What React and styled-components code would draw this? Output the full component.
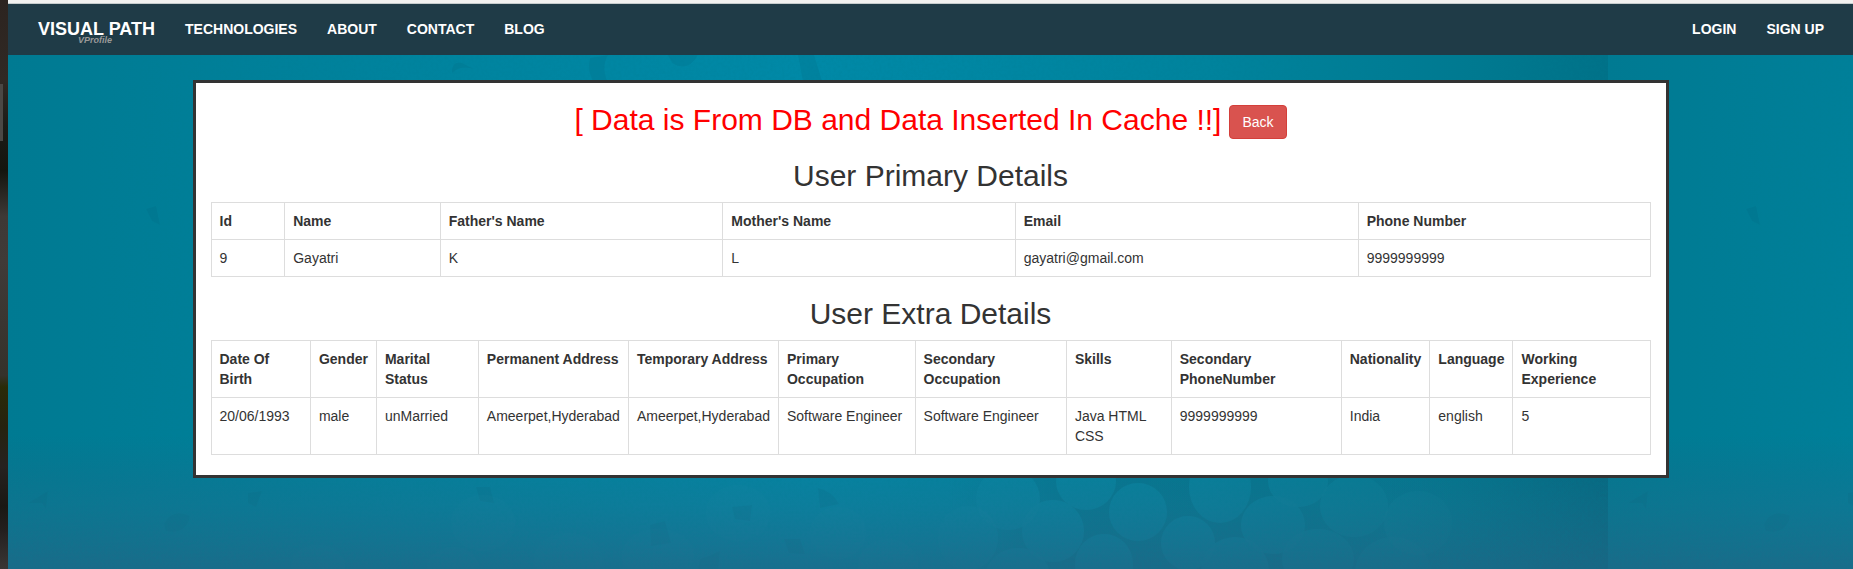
import React from "react";
import styled, { createGlobalStyle } from "styled-components";

const GlobalStyle = createGlobalStyle`
  *, *::before, *::after { box-sizing: border-box; }
  html, body { margin: 0; padding: 0; }
  body {
    font-family: "Liberation Sans", Arial, sans-serif;
    font-size: 14px;
    line-height: 20px;
    color: #333;
    background: #007d97;
  }
`;

const Frame = styled.div`
  display: grid;
  grid-template-columns: 8px minmax(0, 1fr);
  min-height: 100vh;
`;

const DesktopEdge = styled.div`
  background:
    linear-gradient(#4a4845, #4a4845) 0 84px / 3px 57px no-repeat,
    linear-gradient(180deg,
      #2c2420 0%, #302924 14%, #1c1c18 22%, #14150e 30%,
      #3e3936 38%, #403b38 46%, #35322b 66%, #2a2b08 68%,
      #26230f 75%, #262220 82%, #1a1814 89%, #231f1e 93%, #3a3635 100%);
`;

const Page = styled.div`
  position: relative;
  isolation: isolate;
  display: flex;
  flex-direction: column;
  border-top: 3px solid #f1f1f0;
`;

const Backdrop = styled.svg`
  position: absolute;
  inset: 0;
  z-index: -1;
  width: 100%;
  height: 100%;
`;

const Navbar = styled.nav`
  display: flex;
  justify-content: space-between;
  height: 52px;
  padding: 0 14px 0 15px;
  background: #1f3b47;
  border-top: 1px solid #c5cccd;
`;

const NavGroup = styled.div`
  display: flex;
`;

const NavLink = styled.a`
  padding: 15px;
  color: #fff;
  font-weight: bold;
  text-decoration: none;
`;

const Brand = styled.a`
  display: flex;
  flex-direction: column;
  padding: 16px 15px 0;
  color: #fff;
  font-size: 18px;
  font-weight: bold;
  line-height: 18px;
  text-decoration: none;
`;

const BrandTag = styled.small`
  padding-left: 40px;
  margin-top: -2px;
  color: #999;
  font-size: 9px;
  font-style: italic;
  line-height: 8px;
`;

const Panel = styled.main`
  width: 80%;
  margin: 25px auto 0;
  padding: 0 15px;
  background: #fff;
  border: 3px solid #333;
  text-align: center;
`;

const Heading = styled.h2`
  margin: 20px 0 10px;
  font-size: 30px;
  font-weight: normal;
  line-height: 33px;
`;

const Notice = styled(Heading)`
  display: flex;
  align-items: flex-start;
  justify-content: center;
  gap: 8px;
  height: 36px;
  margin-bottom: 20px;
  color: red;
`;

const BackButton = styled.button`
  height: 34px;
  margin-top: 2px;
  padding: 0 12px;
  border: 1px solid #d43f3a;
  border-radius: 4px;
  background: #d9534f;
  color: #fff;
  font: inherit;
  font-size: 14px;
  line-height: 20px;
  cursor: pointer;
`;

const DataTable = styled.table`
  width: 100%;
  margin-bottom: 20px;
  border: 1px solid #ddd;
  border-collapse: collapse;
  text-align: left;

  th, td {
    padding: 8px;
    border: 1px solid #ddd;
    vertical-align: top;
  }
`;

const primary = {
  headers: ["Id", "Name", "Father's Name", "Mother's Name", "Email", "Phone Number"],
  values: ["9", "Gayatri", "K", "L", "gayatri@gmail.com", "9999999999"],
};

const extra = {
  headers: [
    "Date Of Birth", "Gender", "Marital Status", "Permanent Address",
    "Temporary Address", "Primary Occupation", "Secondary Occupation", "Skills",
    "Secondary PhoneNumber", "Nationality", "Language", "Working Experience",
  ],
  values: [
    "20/06/1993", "male", "unMarried", "Ameerpet,Hyderabad",
    "Ameerpet,Hyderabad", "Software Engineer", "Software Engineer", "Java HTML CSS",
    "9999999999", "India", "english", "5",
  ],
};

function DetailsTable({ id, title, data }) {
  return (
    <>
      <Heading id={id}>{title}</Heading>
      <DataTable aria-labelledby={id}>
        <thead>
          <tr>{data.headers.map((h) => <th key={h} scope="col">{h}</th>)}</tr>
        </thead>
        <tbody>
          <tr>{data.values.map((v, i) => <td key={i}>{v}</td>)}</tr>
        </tbody>
      </DataTable>
    </>
  );
}

// Pebbles as [cx, cy, rx, ry] on the 1600px wide stone tile.
const pebbles = [
  [1130, 509, 29, 29], [1045, 528, 31, 31], [1078, 478, 30, 29], [1212, 484, 31, 36],
  [1180, 540, 27, 27], [1096, 561, 29, 30], [1010, 573, 32, 28], [1265, 522, 32, 29],
  [1227, 568, 34, 34], [1000, 496, 32, 31], [960, 535, 30, 32], [1346, 503, 34, 31],
  [1310, 556, 36, 30], [1290, 478, 30, 26], [1410, 520, 34, 32], [1385, 570, 38, 36],
  [475, 520, 32, 28], [560, 556, 34, 26], [310, 562, 27, 20], [445, 566, 26, 22],
  [830, 530, 28, 26], [880, 562, 30, 26], [650, 552, 36, 26], [730, 510, 32, 28],
];

const shards = [
  "M468 484 L482 484 L486 500 L472 498 Z", "M810 485 Q824 488 831 501 L812 505 Z",
  "M642 522 L657 518 L663 540 L643 543 Z", "M776 536 L792 536 L797 551 L781 550 Z",
  "M156 521 Q164 505 182 513 Q178 532 158 528 Z", "M692 556 Q702 553 712 548 L710 569 L690 569 Z",
  "M240 490 L254 488 L248 504 L240 500 Z", "M724 504 L744 502 L742 518 L727 516 Z",
  "M444 66 Q446 58 454 60 L466 66 Q452 62 444 70 Z",
  "M138 206 L148 203 L152 222 L144 218 Z", "M40 488 L20 500 L34 500 L38 506 Z",
  "M582 55 Q578 68 588 84 L602 84 Q592 66 600 52 Z",
  "M660 52 L690 52 Q680 70 664 60 Z", "M790 52 L806 52 L816 84 L796 84 Z",
];

function StoneBackdrop() {
  return (
    <Backdrop aria-hidden="true">
      <defs>
        <linearGradient id="sides">
          <stop offset="0" stopColor="#007a92" />
          <stop offset="0.25" stopColor="#00839e" />
          <stop offset="0.5" stopColor="#0089a7" />
          <stop offset="0.75" stopColor="#00839d" />
          <stop offset="0.92" stopColor="#007990" />
          <stop offset="1" stopColor="#007188" />
        </linearGradient>
        <linearGradient id="depth" x2="0" y2="1">
          <stop offset="0.76" stopColor="#246080" stopOpacity="0" />
          <stop offset="0.88" stopColor="#246a8a" stopOpacity="0.35" />
          <stop offset="1" stopColor="#246484" stopOpacity="0.74" />
        </linearGradient>
        <linearGradient id="seam">
          <stop offset="0" stopColor="#004f66" stopOpacity="0" />
          <stop offset="1" stopColor="#004f66" stopOpacity="0.22" />
        </linearGradient>
        <linearGradient id="bedFade">
          <stop offset="0" stopColor="#045f74" stopOpacity="0" />
          <stop offset="0.25" stopColor="#045f74" stopOpacity="0.3" />
          <stop offset="0.65" stopColor="#045f74" stopOpacity="0.28" />
          <stop offset="1" stopColor="#045f74" stopOpacity="0" />
        </linearGradient>
        <filter id="grain" x="0" y="0" width="100%" height="100%">
          <feTurbulence type="fractalNoise" baseFrequency="0.35" numOctaves="3" seed="4" />
          <feColorMatrix values="0 0 0 0 0  0 0 0 0 0.2  0 0 0 0 0.28  0.35 0 0 0 -0.12" />
        </filter>
        <mask id="gaps">
          <rect width="1600" height="569" fill="#fff" />
          {pebbles.map(([cx, cy, rx, ry]) => (
            <ellipse key={`${cx}-${cy}`} cx={cx} cy={cy} rx={rx} ry={ry} fill="#000" />
          ))}
        </mask>
        <pattern id="stone" width="1600" height="569" patternUnits="userSpaceOnUse">
          <rect width="1600" height="569" fill="url(#sides)" />
          <g fill="#005f78" fillOpacity="0.16">
            {shards.map((d) => <path key={d} d={d} />)}
          </g>
          <rect x="940" y="470" width="500" height="99" fill="url(#bedFade)" mask="url(#gaps)" />
          <rect x="1380" y="470" width="220" height="99" fill="url(#seam)" />
          <g fill="#3a9cb4" fillOpacity="0.05">
            {pebbles.map(([cx, cy, rx, ry]) => (
              <ellipse key={`${cx}-${cy}`} cx={cx} cy={cy} rx={rx} ry={ry} />
            ))}
          </g>
          <rect width="1600" height="569" fill="url(#depth)" />
        </pattern>
      </defs>
      <rect width="100%" height="100%" fill="url(#stone)" />
      <rect width="100%" height="100%" filter="url(#grain)" />
    </Backdrop>
  );
}

export default function App() {
  return (
    <>
      <GlobalStyle />
      <Frame>
        <DesktopEdge />
        <Page>
          <StoneBackdrop />
          <Navbar aria-label="Main">
            <NavGroup>
              <Brand href="#home">
                VISUAL PATH
                <BrandTag>VProfile</BrandTag>
              </Brand>
              <NavLink href="#technologies">TECHNOLOGIES</NavLink>
              <NavLink href="#about">ABOUT</NavLink>
              <NavLink href="#contact">CONTACT</NavLink>
              <NavLink href="#blog">BLOG</NavLink>
            </NavGroup>
            <NavGroup>
              <NavLink href="#login">LOGIN</NavLink>
              <NavLink href="#signup">SIGN UP</NavLink>
            </NavGroup>
          </Navbar>
          <Panel>
            <Notice>
              [ Data is From DB and Data Inserted In Cache !!]
              <BackButton type="button">Back</BackButton>
            </Notice>
            <DetailsTable id="primary" title="User Primary Details" data={primary} />
            <DetailsTable id="extra" title="User Extra Details" data={extra} />
          </Panel>
        </Page>
      </Frame>
    </>
  );
}
